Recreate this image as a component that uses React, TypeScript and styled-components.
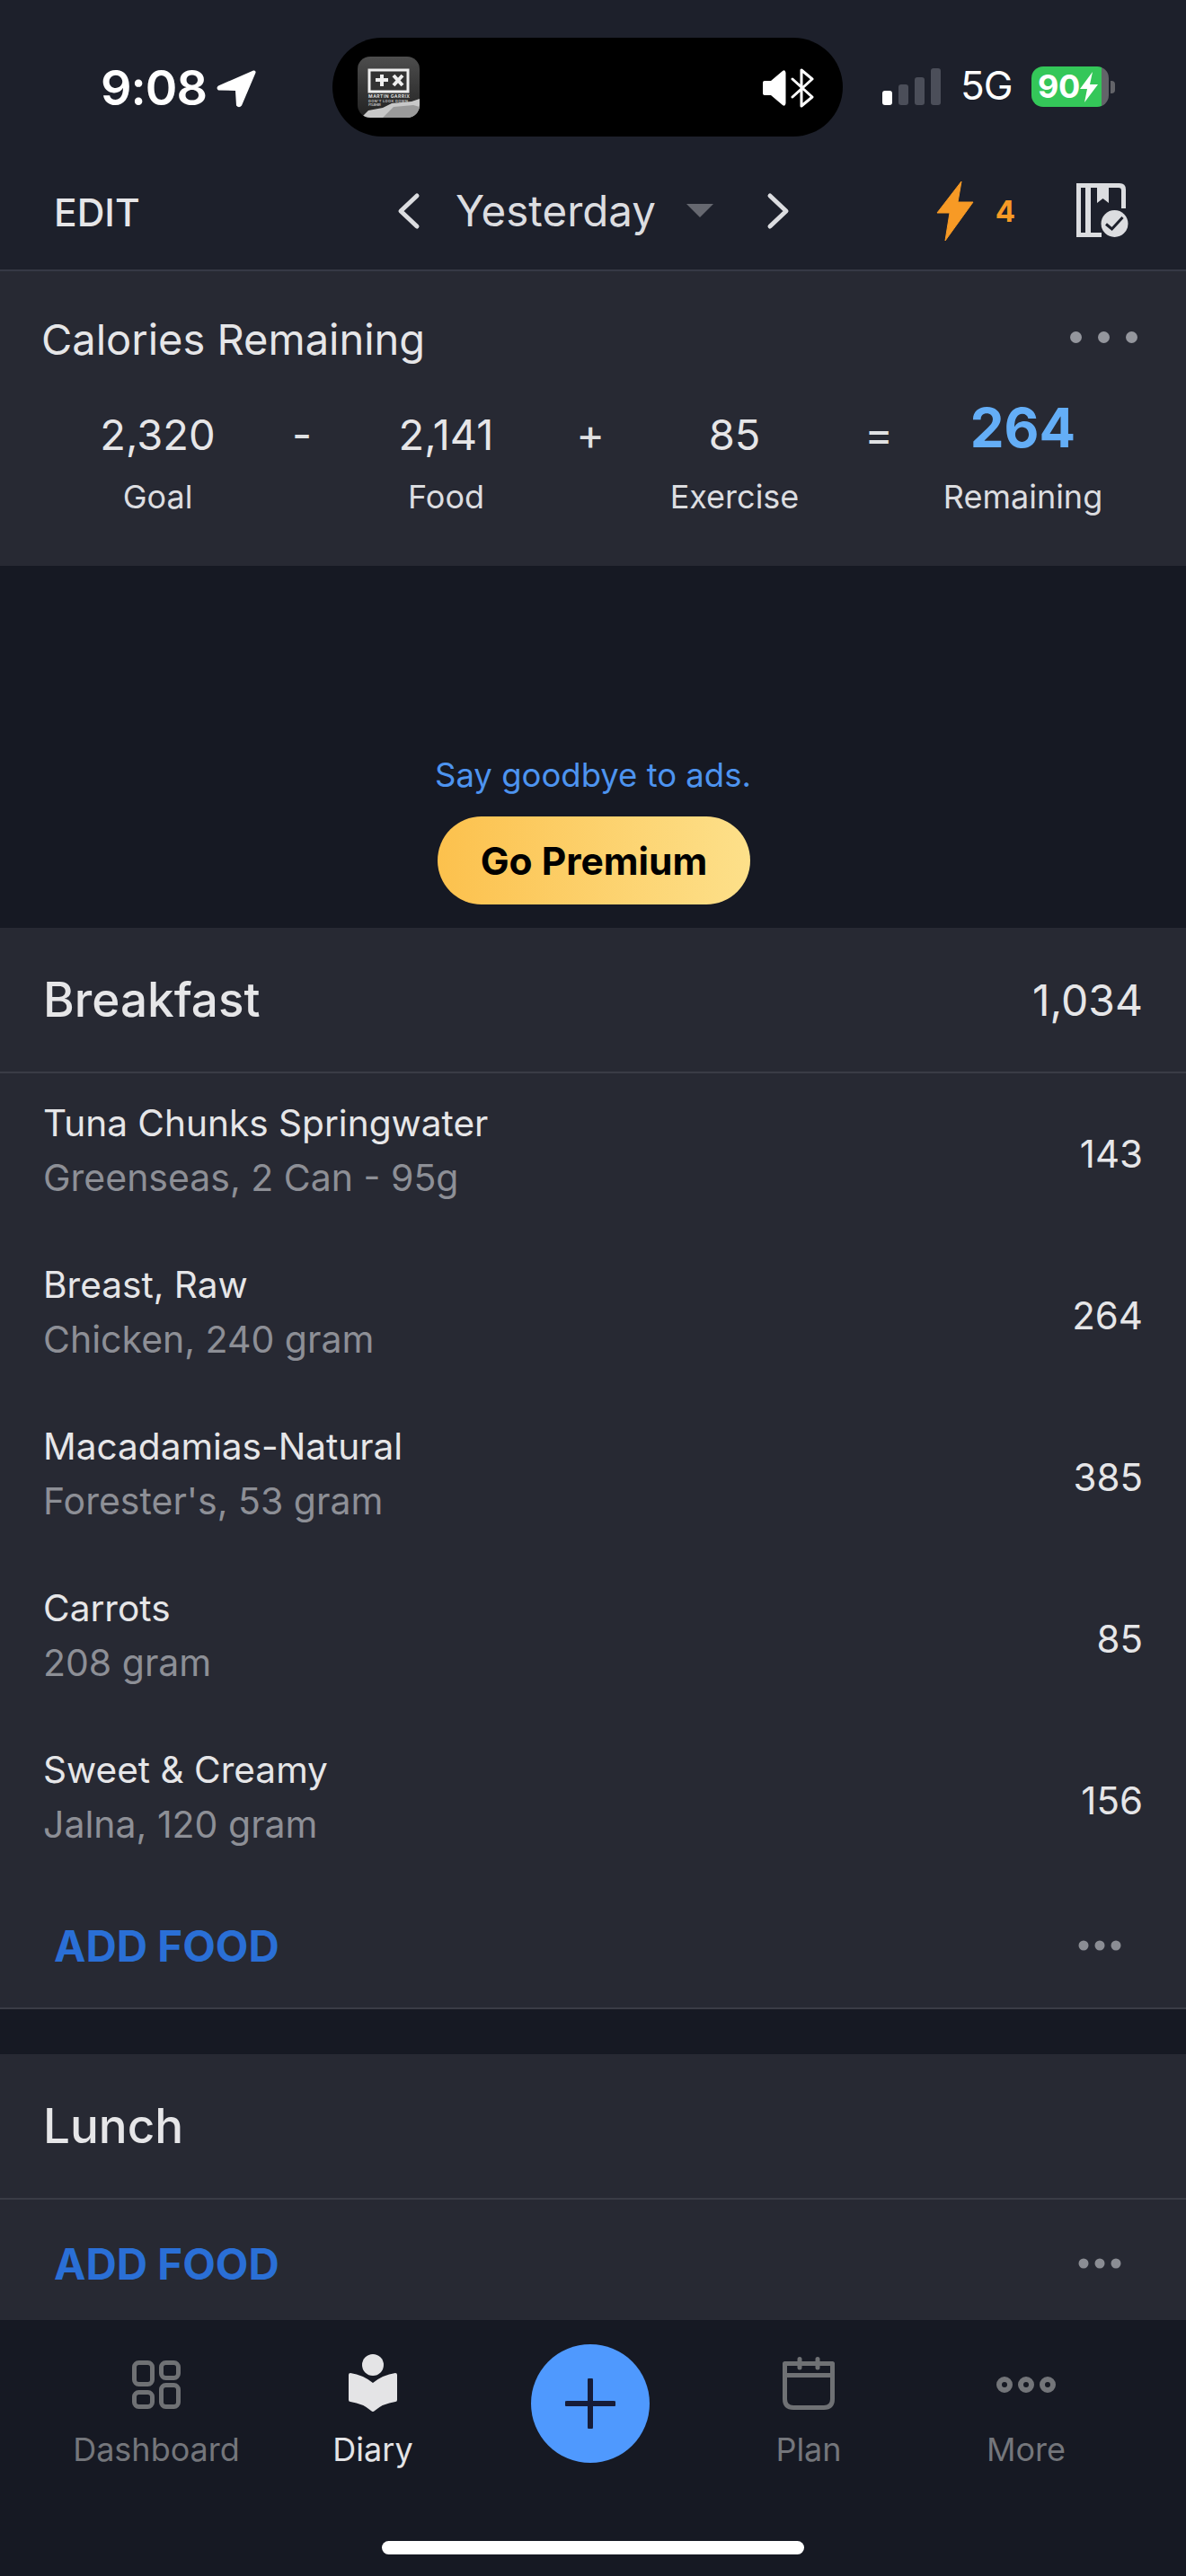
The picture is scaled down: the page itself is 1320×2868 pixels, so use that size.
import React from 'react'
import styled, {createGlobalStyle} from 'styled-components'

const GlobalStyle = createGlobalStyle`
    html, body {
        margin: 0;
        padding: 0;
        background: #161923;
    }
    * {
        box-sizing: border-box;
    }
`

type FoodType = {
    title: string
    sub: string
    calories: string
}

const breakfast: FoodType[] = [
    {title: 'Tuna Chunks Springwater', sub: 'Greenseas, 2 Can - 95g', calories: '143'},
    {title: 'Breast, Raw', sub: 'Chicken, 240 gram', calories: '264'},
    {title: 'Macadamias-Natural', sub: "Forester's, 53 gram", calories: '385'},
    {title: 'Carrots', sub: '208 gram', calories: '85'},
    {title: 'Sweet & Creamy', sub: 'Jalna, 120 gram', calories: '156'},
]

const Dots = () => (
    <svg width="48" height="12" viewBox="0 0 48 12">
        <circle cx="6" cy="6" r="5.5" fill="#8b8d94"/>
        <circle cx="24" cy="6" r="5.5" fill="#8b8d94"/>
        <circle cx="42" cy="6" r="5.5" fill="#8b8d94"/>
    </svg>
)

const AlbumArt = () => (
    <svg width="69" height="68" viewBox="0 0 69 68">
        <defs>
            <linearGradient id="album" x1="0" y1="0" x2="0" y2="1">
                <stop offset="0" stopColor="#4d4d4d"/>
                <stop offset="1" stopColor="#222"/>
            </linearGradient>
            <clipPath id="albumClip">
                <rect width="69" height="68" rx="14"/>
            </clipPath>
        </defs>
        <g clipPath="url(#albumClip)">
            <rect width="69" height="68" fill="url(#album)"/>
            <rect x="13" y="15" width="43" height="24" fill="#333" stroke="#eee" strokeWidth="3"/>
            <path d="M20 26h14M27 20v13" stroke="#eee" strokeWidth="4"/>
            <path d="M40 21l10 11M50 21l-10 11" stroke="#eee" strokeWidth="4"/>
            <text x="12" y="46" fontFamily="Inter, sans-serif" fontSize="5" fontWeight="700" fill="#ddd" textLength="46">MARTIN GARRIX</text>
            <text x="12" y="51" fontFamily="Inter, sans-serif" fontSize="4" fontWeight="700" fill="#bbb" textLength="44">DON'T LOOK DOWN</text>
            <text x="12" y="55" fontFamily="Inter, sans-serif" fontSize="4" fontWeight="700" fill="#aaa" textLength="14">FT. USHER</text>
            <path d="M4 68 L12 60 L28 57 L38 52 L60 50 L69 47 V68Z" fill="#c8c8c8"/>
            <path d="M28 68 L40 56 L62 54 L69 56 V68Z" fill="#9a9a9a"/>
        </g>
    </svg>
)

const App = () => {
    return (
        <Page>
            <GlobalStyle/>
            <Header>
                <StatusBar>
                    <Time>9:08</Time>
                    <LocationArrow width="44" height="42" viewBox="0 0 44 42">
                        <path d="M41 0.500 L2 17.500 Q-1 20 2 22.500 L21 23 L22 39.500 Q25 43 28 39.500 L43.500 3 Q44 0 41 0.500Z" fill="#fff"/>
                    </LocationArrow>
                    <Island>
                        <AlbumArt/>
                        <IslandIcons>
                            <svg width="26" height="40" viewBox="0 0 26 40">
                                <path d="M0 14 Q0 12 2 12 H9 L22 1 Q25 -1 25.500 3 V37 Q25 41 22 39 L9 28 H2 Q0 28 0 26Z" fill="#fff"/>
                            </svg>
                            <svg width="26" height="44" viewBox="0 0 26 44">
                                <path d="M2 12 L24 32 L12 42 V2 L24 12 L2 32" fill="none" stroke="#fff" strokeWidth="3" strokeLinecap="round" strokeLinejoin="round"/>
                            </svg>
                        </IslandIcons>
                    </Island>
                    <Signal>
                        <SignalBar $height={16} $active/>
                        <SignalBar $height={23}/>
                        <SignalBar $height={31}/>
                        <SignalBar $height={41}/>
                    </Signal>
                    <Network>5G</Network>
                    <Battery>
                        <BatteryBody>
                            <BatteryText>90</BatteryText>
                            <svg width="20" height="34" viewBox="0 0 20 34">
                                <path d="M14 0 L0 19 H8 L5 34 L20 14 H11Z" fill="#fff"/>
                            </svg>
                        </BatteryBody>
                        <BatteryNub/>
                    </Battery>
                </StatusBar>
                <NavBar>
                    <EditLabel>EDIT</EditLabel>
                    <DateNav>
                        <svg width="28" height="42" viewBox="0 0 28 42">
                            <path d="M23 4 L5 21 L23 38" fill="none" stroke="#dcdde0" strokeWidth="5" strokeLinecap="round" strokeLinejoin="round"/>
                        </svg>
                        <DateLabel>Yesterday</DateLabel>
                        <DateCaret/>
                        <svg width="28" height="42" viewBox="0 0 28 42">
                            <path d="M5 4 L23 21 L5 38" fill="none" stroke="#dcdde0" strokeWidth="5" strokeLinecap="round" strokeLinejoin="round"/>
                        </svg>
                    </DateNav>
                    <NavRight>
                        <svg width="42" height="68" viewBox="0 0 42 68">
                            <path d="M28 1 L1 36 H15 L10 67 L41 24 H24Z" fill="#f79a25" stroke="#f79a25" strokeWidth="1" strokeLinejoin="round"/>
                        </svg>
                        <Streak>4</Streak>
                        <svg width="58" height="62" viewBox="0 0 58 62">
                            <path d="M0 0 H48 Q55 0 55 7 V28 H50 V8 Q50 5 47 5 H36 V22 L29.500 17 L23 22 V5 H16 V55 H28 V60 H0Z M5 5 V55 H10 V5Z" fill="#dcdde0" fillRule="evenodd"/>
                            <circle cx="42.500" cy="45" r="15" fill="#dcdde0"/>
                            <path d="M33 45.500 L39.500 51 L51.500 38" fill="none" stroke="#1d202b" strokeWidth="3"/>
                        </svg>
                    </NavRight>
                </NavBar>
            </Header>

            <Summary>
                <SummaryTop>
                    <SummaryTitle>Calories Remaining</SummaryTitle>
                    <SummaryDots>
                        <SummaryDot/>
                        <SummaryDot/>
                        <SummaryDot/>
                    </SummaryDots>
                </SummaryTop>
                <SummaryGrid>
                    <Stat>
                        <StatValue>2,320</StatValue>
                        <StatLabel>Goal</StatLabel>
                    </Stat>
                    <Operator>-</Operator>
                    <Stat>
                        <StatValue>2,141</StatValue>
                        <StatLabel>Food</StatLabel>
                    </Stat>
                    <Operator>+</Operator>
                    <Stat>
                        <StatValue>85</StatValue>
                        <StatLabel>Exercise</StatLabel>
                    </Stat>
                    <Operator>=</Operator>
                    <Stat>
                        <StatValue $highlight>264</StatValue>
                        <StatLabel>Remaining</StatLabel>
                    </Stat>
                </SummaryGrid>
            </Summary>

            <AdZone>
                <AdText>Say goodbye to ads.</AdText>
                <PremiumButton>Go Premium</PremiumButton>
            </AdZone>

            <MealCard>
                <MealHeader>
                    <MealTitle>Breakfast</MealTitle>
                    <MealTotal>1,034</MealTotal>
                </MealHeader>
                <FoodList>
                    {breakfast.map(f => (
                        <FoodRow key={f.title}>
                            <div>
                                <FoodTitle>{f.title}</FoodTitle>
                                <FoodSub>{f.sub}</FoodSub>
                            </div>
                            <FoodCalories>{f.calories}</FoodCalories>
                        </FoodRow>
                    ))}
                </FoodList>
                <AddRow>
                    <AddFood>ADD FOOD</AddFood>
                    <Dots/>
                </AddRow>
            </MealCard>

            <LunchCard>
                <MealHeader>
                    <MealTitle>Lunch</MealTitle>
                </MealHeader>
                <AddRow>
                    <AddFood>ADD FOOD</AddFood>
                    <Dots/>
                </AddRow>
            </LunchCard>

            <TabBar>
                <Tabs>
                    <Tab>
                        <TabIcon>
                            <svg width="54" height="54" viewBox="0 0 54 54">
                                <g fill="none" stroke="#6f7174" strokeWidth="5">
                                    <rect x="2.500" y="2.500" width="20" height="24" rx="5"/>
                                    <rect x="32.500" y="2.500" width="19" height="17" rx="5"/>
                                    <rect x="2.500" y="35.500" width="20" height="16" rx="5"/>
                                    <rect x="32.500" y="27.500" width="19" height="24" rx="5"/>
                                </g>
                            </svg>
                        </TabIcon>
                        <TabLabel>Dashboard</TabLabel>
                    </Tab>
                    <Tab $active>
                        <TabIcon>
                            <svg width="54" height="68" viewBox="0 0 54 68">
                                <circle cx="27" cy="12" r="12" fill="#e4e4e6"/>
                                <path d="M2 21 Q16 23 27 32 Q38 23 52 21 Q54 21 54 23 V51 Q54 53 52 53 Q38 55 29 63 Q27 65 25 63 Q16 55 2 53 Q0 53 0 51 V23 Q0 21 2 21Z" fill="#e4e4e6"/>
                            </svg>
                        </TabIcon>
                        <TabLabel>Diary</TabLabel>
                    </Tab>
                    <AddSlot>
                        <AddButton>
                            <svg width="56" height="56" viewBox="0 0 56 56">
                                <path d="M28 2 V54 M2 28 H54" stroke="#161c38" strokeWidth="6" strokeLinecap="round"/>
                            </svg>
                        </AddButton>
                    </AddSlot>
                    <Tab>
                        <TabIcon>
                            <svg width="58" height="62" viewBox="0 0 58 62">
                                <path d="M2.500 7.500 H55.500 V47 Q55.500 56.500 46 56.500 H12 Q2.500 56.500 2.500 47Z" fill="none" stroke="#6f7174" strokeWidth="5" strokeLinejoin="round"/>
                                <path d="M2.500 20.500 H55.500" stroke="#6f7174" strokeWidth="5"/>
                                <path d="M19 2.500 V12 M39 2.500 V12" stroke="#6f7174" strokeWidth="5" strokeLinecap="round"/>
                            </svg>
                        </TabIcon>
                        <TabLabel>Plan</TabLabel>
                    </Tab>
                    <Tab>
                        <TabIcon>
                            <svg width="66" height="18" viewBox="0 0 66 18">
                                <g fill="none" stroke="#737579" strokeWidth="6">
                                    <circle cx="9" cy="9" r="6"/>
                                    <circle cx="33" cy="9" r="6"/>
                                    <circle cx="57" cy="9" r="6"/>
                                </g>
                            </svg>
                        </TabIcon>
                        <TabLabel>More</TabLabel>
                    </Tab>
                </Tabs>
                <HomeIndicator/>
            </TabBar>
        </Page>
    )
}

export default App

const Page = styled.div`
    width: 1320px;
    height: 2868px;
    overflow: hidden;
    display: flex;
    flex-direction: column;
    background: #161923;
    font-family: 'Inter', 'Liberation Sans', sans-serif;
    color: #e6e6e8;
`

const Header = styled.div`
    height: 302px;
    background: #1d202b;
    border-bottom: 2px solid #363945;
`

const StatusBar = styled.div`
    height: 170px;
    padding: 42px 0 18px 112px;
    display: flex;
    align-items: flex-start;
`

const Time = styled.div`
    margin-top: 26px;
    font-size: 54px;
    line-height: 60px;
    font-weight: 600;
    color: #fff;
    width: 125px;
    letter-spacing: -1px;
`

const LocationArrow = styled.svg`
    margin: 36px 0 0 4px;
`

const Island = styled.div`
    margin-left: 85px;
    width: 568px;
    height: 110px;
    border-radius: 55px;
    background: #000;
    padding: 21px 32px 0 28px;
    display: flex;
    justify-content: space-between;
`

const IslandIcons = styled.div`
    display: flex;
    gap: 5px;
    height: 44px;
    margin-top: 13px;
    align-items: center;
`

const Signal = styled.div`
    margin: 34px 0 0 44px;
    height: 41px;
    display: flex;
    gap: 7px;
    align-items: flex-end;
`

const SignalBar = styled.div<{$height: number, $active?: boolean}>`
    width: 11px;
    height: ${props => props.$height}px;
    border-radius: 3px;
    background: ${props => props.$active ? '#fff' : '#4b4e59'};
`

const Network = styled.div`
    width: 56px;
    margin: 28px 0 0 22px;
    font-size: 44px;
    line-height: 50px;
    color: #fff;
    letter-spacing: -1px;
    white-space: nowrap;
`

const Battery = styled.div`
    margin: 32px 0 0 23px;
    display: flex;
    align-items: center;
    gap: 2px;
`

const BatteryBody = styled.div`
    width: 86px;
    height: 45px;
    border-radius: 13px;
    background: linear-gradient(90deg, #34c759 0 78px, #636469 78px);
    padding-left: 7px;
    display: flex;
    align-items: center;
`

const BatteryText = styled.div`
    font-size: 36px;
    font-weight: 700;
    color: #fff;
    line-height: 45px;
    letter-spacing: -0.5px;
`

const BatteryNub = styled.div`
    width: 5px;
    height: 14px;
    border-radius: 0 4px 4px 0;
    background: #636469;
`

const NavBar = styled.div`
    height: 130px;
    padding: 0 64px 0 60px;
    display: flex;
    align-items: center;
`

const EditLabel = styled.div`
    width: 381px;
    margin-top: 3px;
    font-size: 42.5px;
    font-weight: 500;
    color: #e6e6e8;
`

const DateNav = styled.div`
    display: flex;
    align-items: center;
    height: 46px;
    margin-top: -1px;
`

const DateLabel = styled.div`
    margin-left: 38px;
    font-size: 47.5px;
    line-height: 46px;
    font-weight: 400;
    color: #dcdde0;
`

const DateCaret = styled.div`
    margin: 0 58px 0 34px;
    width: 0;
    height: 0;
    border-left: 15px solid transparent;
    border-right: 15px solid transparent;
    border-top: 15px solid #666870;
`

const NavRight = styled.div`
    margin-left: auto;
    display: flex;
    align-items: center;
`

const Streak = styled.div`
    margin: 0 68px 0 24px;
    font-size: 33px;
    font-weight: 700;
    color: #f79a25;
`

const Summary = styled.div`
    height: 328px;
    background: #272933;
    padding: 48px 54px 0 46px;
`

const SummaryTop = styled.div`
    display: flex;
    justify-content: space-between;
    align-items: flex-start;
`

const SummaryTitle = styled.div`
    font-size: 47px;
    line-height: 56px;
    color: #e6e6e8;
`

const SummaryDots = styled.div`
    display: flex;
    gap: 18px;
    margin-top: 19px;
`

const SummaryDot = styled.div`
    width: 13px;
    height: 13px;
    border-radius: 50%;
    background: #94969d;
`

const SummaryGrid = styled.div`
    margin: 41px 0 0 -46px;
    width: 1312px;
    display: grid;
    grid-template-columns: 321px 0 321px 0 321px 0 321px;
    justify-content: start;
    padding-left: 15px;
`

const Stat = styled.div`
    display: flex;
    flex-direction: column;
    align-items: center;
`

const StatValue = styled.div<{$highlight?: boolean}>`
    height: 74px;
    line-height: 74px;
    font-size: ${props => props.$highlight ? '60px' : '47px'};
    font-weight: ${props => props.$highlight ? 700 : 400};
    color: ${props => props.$highlight ? '#64aef7' : '#e6e6e8'};
    margin-top: ${props => props.$highlight ? '-8px' : '0'};
    margin-bottom: ${props => props.$highlight ? '8px' : '0'};
`

const StatLabel = styled.div`
    font-size: 36px;
    line-height: 44px;
    margin-top: 10px;
    color: #dcdde0;
`

const Operator = styled.div`
    width: 0;
    display: flex;
    justify-content: center;
    font-size: 48px;
    line-height: 74px;
    color: #e0e1e3;
`

const AdZone = styled.div`
    height: 403px;
    padding-bottom: 26px;
    display: flex;
    flex-direction: column;
    justify-content: flex-end;
    align-items: center;
`

const AdText = styled.div`
    font-size: 36.5px;
    line-height: 44px;
    color: #4d94f0;
    margin-bottom: 24px;
`

const PremiumButton = styled.div`
    width: 348px;
    height: 98px;
    margin-left: 2px;
    border-radius: 49px;
    background: linear-gradient(90deg, #fcc14d, #fde08a);
    display: flex;
    align-items: center;
    justify-content: center;
    font-size: 42.5px;
    font-weight: 700;
    color: #000;
`

const MealCard = styled.div`
    background: #272933;
    border-bottom: 2px solid #3a3c46;
    height: 1204px;
`

const LunchCard = styled(MealCard)`
    margin-top: 50px;
    border-bottom: none;
    height: auto;
    flex: 1;
`

const MealHeader = styled.div`
    height: 162px;
    padding: 0 48px;
    border-bottom: 2px solid #3a3c46;
    display: flex;
    align-items: center;
    justify-content: space-between;
`

const MealTitle = styled.div`
    font-size: 53px;
    font-weight: 500;
    color: #e6e6e8;
`

const MealTotal = styled.div`
    font-size: 48px;
    color: #e6e6e8;
`

const FoodList = styled.div`
    display: flex;
    flex-direction: column;
`

const FoodRow = styled.div`
    height: 180px;
    padding: 0 48px 8px;
    display: flex;
    justify-content: space-between;
    align-items: center;
`

const FoodTitle = styled.div`
    font-size: 40.6px;
    line-height: 60px;
    color: #e6e6e8;
`

const FoodSub = styled.div`
    font-size: 41px;
    line-height: 60px;
    color: #8d8f96;
`

const FoodCalories = styled.div`
    margin-top: 6px;
    font-size: 42px;
    color: #e6e6e8;
`

const AddRow = styled.div`
    height: 128px;
    padding: 14px 72px 0 60px;
    display: flex;
    align-items: center;
    justify-content: space-between;
`

const AddFood = styled.div`
    font-size: 47.5px;
    font-weight: 700;
    color: #2a6fd6;
`

const TabBar = styled.div`
    height: 285px;
    background: #161923;
    display: flex;
    flex-direction: column;
    align-items: center;
`

const Tabs = styled.div`
    width: 100%;
    height: 246px;
    padding: 27px 0 0 0;
    display: grid;
    grid-template-columns: 348px 134px 350px 136px 348px;
`

const Tab = styled.div<{$active?: boolean}>`
    display: flex;
    flex-direction: column;
    align-items: center;
    color: ${props => props.$active ? '#e4e4e6' : '#74767b'};
`

const TabIcon = styled.div`
    height: 78px;
    margin-top: 6px;
    display: flex;
    align-items: center;
    justify-content: center;
`

const TabLabel = styled.div`
    margin-top: 11px;
    font-size: 36px;
    line-height: 44px;
`

const AddSlot = styled.div`
    display: flex;
    justify-content: center;
`

const AddButton = styled.div`
    width: 132px;
    height: 132px;
    border-radius: 50%;
    background: #4f99fe;
    display: flex;
    align-items: center;
    justify-content: center;
`

const HomeIndicator = styled.div`
    width: 470px;
    height: 15px;
    border-radius: 8px;
    background: #fff;
`
